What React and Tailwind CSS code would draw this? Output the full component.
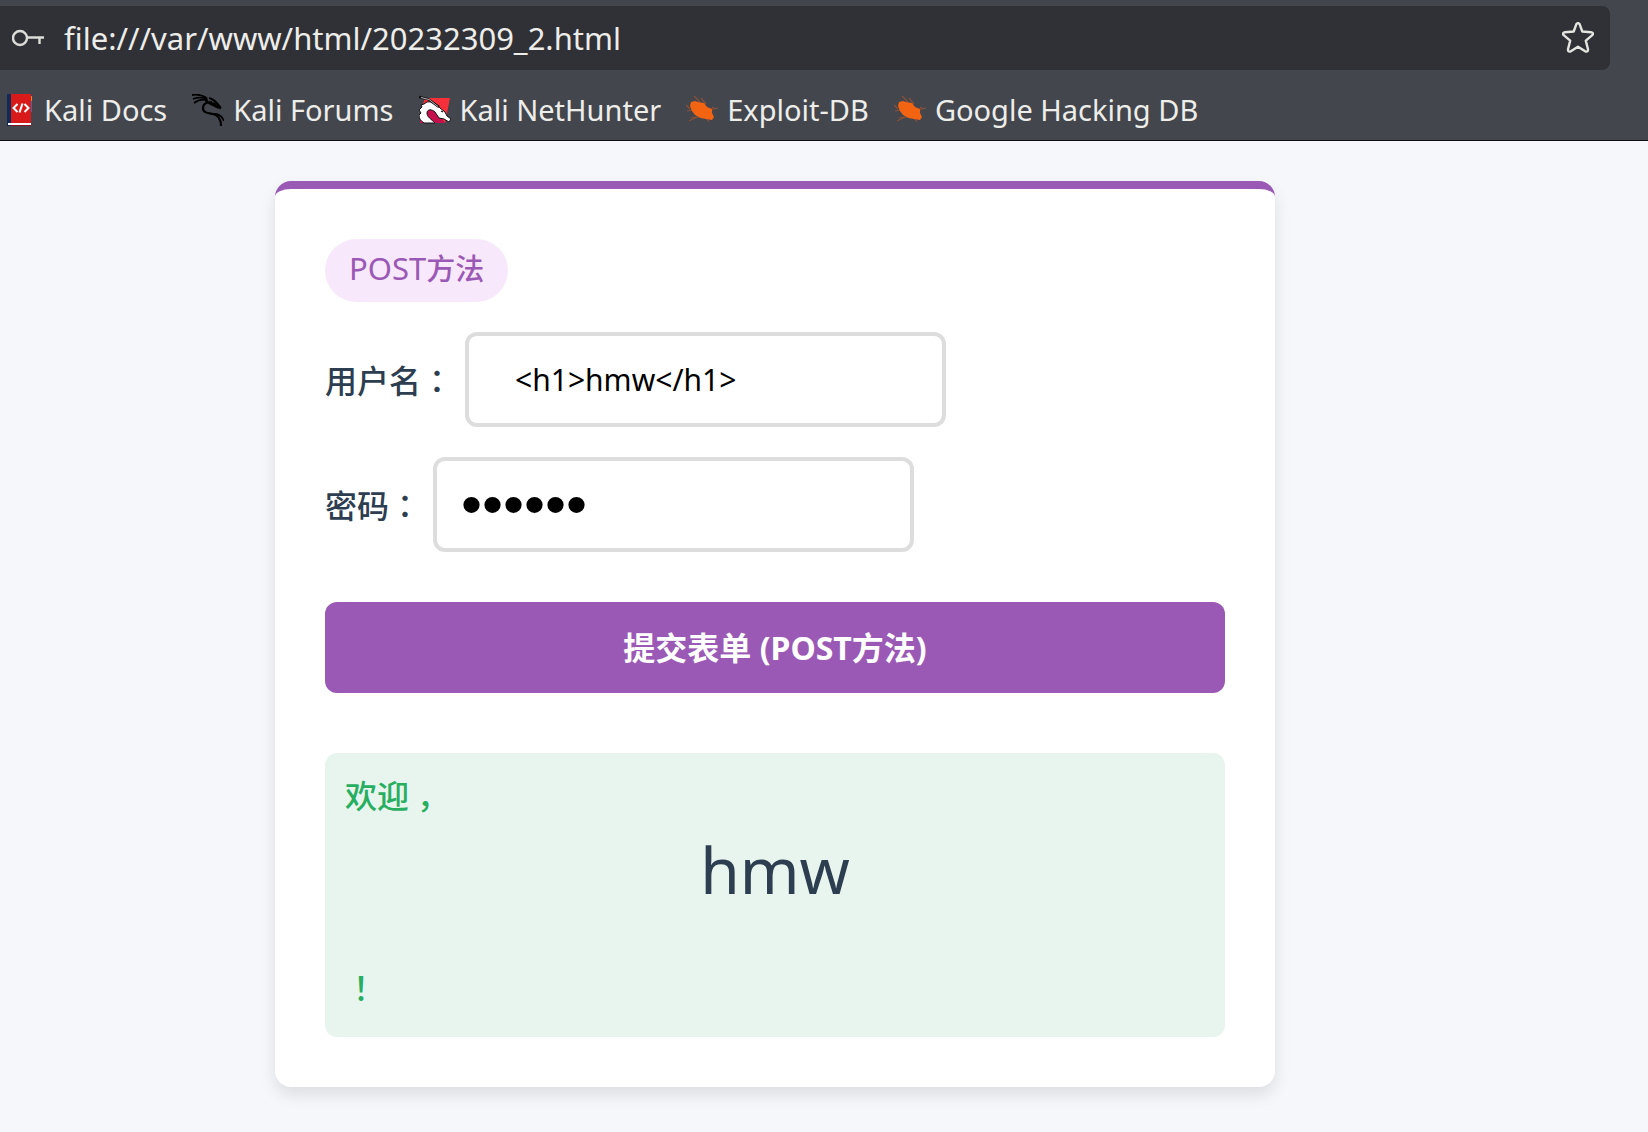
import { useState } from 'react'

function KeyIcon() {
  return (
    <svg className="h-8 w-8 shrink-0" viewBox="0 0 32 32" fill="none" stroke="#dcdcd8" strokeWidth="2.400">
      <circle cx="8" cy="16" r="7" />
      <path d="M15 15.500H32M27.500 15.500V22" />
    </svg>
  )
}

function StarIcon() {
  return (
    <svg className="h-8 w-8" viewBox="0 0 32 32" fill="none" stroke="#e4e4e0" strokeWidth="2.400" strokeLinejoin="round">
      <path d="M14.300 2.300Q16 0 17.700 2.300L20.300 9.500L29 10.200Q32.200 11 30.300 13.200L23.800 18.600L26 27.300Q26.200 30.400 23.200 29.300L16 24.700L8.800 29.300Q5.800 30.400 6 27.300L8.200 18.600L1.700 13.200Q-0.200 11 3 10.200L11.700 9.500Z" />
    </svg>
  )
}

function DocsIcon() {
  return (
    <svg className="h-8 w-8 shrink-0" viewBox="0 0 32 32">
      <path d="M28 2h1v5h-1z" fill="#e8862a" />
      <path d="M28 7h1v11h-1z" fill="#3c6ea8" />
      <path d="M4 0h5v32H4z" fill="#122a55" />
      <path d="M8 0h20v29H8z" fill="#d91a1a" />
      <path d="M5 29h23v2H5z" fill="#fff" />
      <path d="M8 31h20v1H8z" fill="#8c1020" />
      <path d="M14.500 10l-4 4 4 4M21.500 10l4 4-4 4M19.500 9.500l-3 9" stroke="#fff" strokeWidth="2" fill="none" />
    </svg>
  )
}

function DragonIcon() {
  return (
    <svg className="h-8 w-8 shrink-0" viewBox="0 0 32 32" fill="none" stroke="#000">
      <path d="M0 1C5 0 10 1 15 4M1 5C6 3 10 3 15 5M2 9C6 6 10 5 15 6" strokeWidth="1.800" />
      <path d="M12 2l3 2 1 4 7 1 6 6-4-1-8-4-4-3z" fill="#000" strokeWidth="0.500" />
      <path d="M20 8C14 8 11 10 11 14C11 19 16 19 21 20C26 21 29 25 29 32" strokeWidth="2.200" />
      <path d="M17 4C22 5 25 9 29 14M22 20C27 20 30 22 32 27" strokeWidth="1.800" />
    </svg>
  )
}

function NetHunterIcon() {
  return (
    <svg className="h-8 w-8 shrink-0" viewBox="0 0 32 32">
      <path d="M6 4h25l-5 25H1V19z" fill="#f5303a" />
      <path d="M1 22l10-9 10 9 5 7H1z" fill="#c4104c" />
      <path
        d="M5 29C2 27 0 25 0 21L2 19L0 16L3 13L2 11L5 10L8 8C13 7 18 10 21 14L26 18L28 22L32 25L30 28L25 25L20 24L16 18C13 15 8 15 8 19C8 23 12 25 16 29z"
        fill="#fff"
        stroke="#101014"
      />
      <path d="M0 3l9 2 11 8" stroke="#111" strokeWidth="2.400" fill="none" />
      <path d="M2 3.500l8 2 9 7" stroke="#ddd" strokeWidth="0.800" fill="none" />
      <path d="M22 17l2 1" stroke="#111" strokeWidth="1.200" />
    </svg>
  )
}

function BugIcon() {
  return (
    <svg className="h-8 w-8 shrink-0" viewBox="0 0 32 32">
      <path
        d="M0 11l4 4M1 17l7-1M8 2l6 6M15 4l5 6M23 16l9-2M26 13l3 2M3 27l8-4 6 1M20 24l3 4M11 23l-6 1"
        stroke="#8a5038"
        strokeWidth="1.200"
        fill="none"
      />
      <path d="M4 12l1-4 4-1 3 1 6 1 3 4 5 2v4l2 4-2 3-6-1-5-1-6-3-3-4z" fill="#f26411" />
    </svg>
  )
}

const bookmarks = [
  { name: 'Kali Docs', Icon: DocsIcon },
  { name: 'Kali Forums', Icon: DragonIcon },
  { name: 'Kali NetHunter', Icon: NetHunterIcon },
  { name: 'Exploit-DB', Icon: BugIcon },
  { name: 'Google Hacking DB', Icon: BugIcon }
]

export default function App() {
  const [url, setUrl] = useState('file:///var/www/html/20232309_2.html')
  const [formData, setFormData] = useState({
    username: '<h1>hmw</h1>',
    password: '123456'
  })

  const handleChange = (e) => {
    setFormData({ ...formData, [e.target.name]: e.target.value })
  }

  return (
    <div className="min-h-screen bg-[#f5f7fb] font-['Noto_Sans','Noto_Sans_CJK_SC',sans-serif]">
      {/* Browser toolbar */}
      <header className="border-b border-[#0c0b12] bg-[#43464d] pt-1.5 text-[#ededea]">
        <div className="mr-[38px] flex h-16 items-center rounded-r-lg bg-[#303136] pl-3 pr-4">
          <KeyIcon />
          <input
            type="text"
            aria-label="Address"
            value={url}
            onChange={(e) => setUrl(e.target.value)}
            className="ml-5 min-w-0 flex-1 bg-transparent text-[31px] outline-none"
          />
          <button type="button" aria-label="Bookmark this page">
            <StarIcon />
          </button>
        </div>
        <nav className="flex h-[70px] items-center gap-[25px] pl-[3px] pt-2.5 text-[29px]">
          {bookmarks.map(({ name, Icon }) => (
            <a key={name} href="#" className="flex items-center gap-[9px] whitespace-nowrap">
              <Icon />
              {name}
            </a>
          ))}
        </nav>
      </header>

      {/* Form card */}
      <main className="pl-[275px] pt-10">
        <form
          onSubmit={(e) => e.preventDefault()}
          className="max-w-[1000px] rounded-2xl border-t-8 border-[#9b59b6] bg-white p-[50px] text-[32px] text-[#2c3e50] shadow-[0_8px_16px_rgba(0,0,0,0.1)]"
        >
          <div className="inline-flex h-[63px] items-baseline rounded-full bg-[#f8e8fb] px-6 text-[29px] font-medium leading-[58px] text-[#9b59b6]">
            <span className="text-[31px] font-normal">POST</span>方法
          </div>

          <div className="mt-[30px] flex items-center gap-3">
            <label htmlFor="username" className="font-medium">
              用户名<span className="font-['Noto_Sans_CJK_JP',sans-serif]">：</span>
            </label>
            <input
              id="username"
              name="username"
              type="text"
              value={formData.username}
              onChange={handleChange}
              className="h-[95px] w-[481px] rounded-xl border-4 border-[#ddd] bg-white pl-[46px] pr-6 text-[30px] text-black outline-none"
            />
          </div>

          <div className="mt-[30px] flex items-center gap-3">
            <label htmlFor="password" className="font-medium">
              密码<span className="font-['Noto_Sans_CJK_JP',sans-serif]">：</span>
            </label>
            <input
              id="password"
              name="password"
              type="password"
              value={formData.password}
              onChange={handleChange}
              className="h-[95px] w-[481px] rounded-xl border-4 border-[#ddd] bg-white px-6 font-['Liberation_Sans',sans-serif] text-[60px] text-black outline-none"
            />
          </div>

          <button type="submit" className="mt-[50px] h-[91px] w-full rounded-xl bg-[#9b59b6] font-bold text-white">
            提交表单 (POST方法)
          </button>

          <div className="mt-[60px] rounded-xl bg-[#e8f5ee] px-5 pb-7 pt-5 leading-[45px]">
            <p className="flex gap-2 font-medium text-[#27ae60]">
              欢迎<span>，</span>
            </p>
            <h1 className="pb-12 pt-1.5 text-center text-[64px] leading-[92px]">hmw</h1>
            <p className="font-['Noto_Sans_CJK_JP',sans-serif] font-medium text-[#27ae60]">！</p>
          </div>
        </form>
      </main>
    </div>
  )
}
